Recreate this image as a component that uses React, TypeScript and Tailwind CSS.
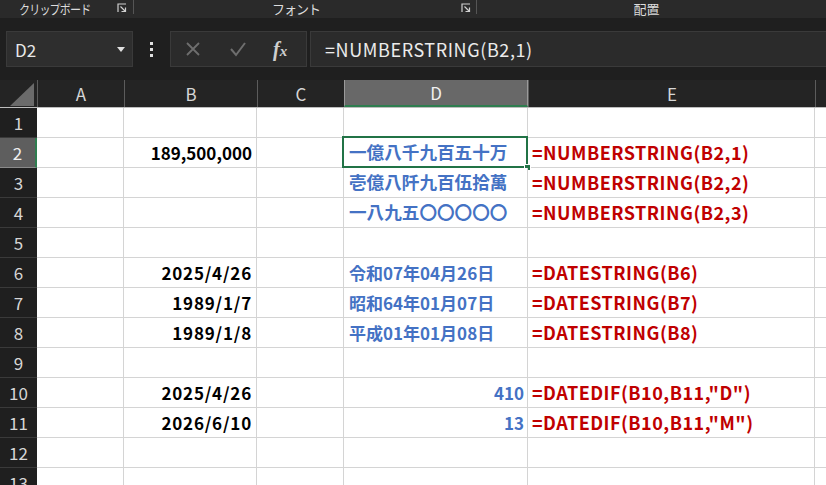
import React from 'react'

const jp = "font-['Noto_Sans_CJK_JP','Noto_Sans',sans-serif]"

type Row = { b?: string; d?: string; dRight?: boolean; e?: string; dSmall?: boolean }

const rows: Row[] = [
  {},
  { b: '189,500,000', d: '一億八千九百五十万', e: '=NUMBERSTRING(B2,1)' },
  { d: '壱億八阡九百伍拾萬', e: '=NUMBERSTRING(B2,2)' },
  { d: '一八九五〇〇〇〇〇', e: '=NUMBERSTRING(B2,3)' },
  {},
  { b: '2025/4/26', d: '令和07年04月26日', dSmall: true, e: '=DATESTRING(B6)' },
  { b: '1989/1/7', d: '昭和64年01月07日', dSmall: true, e: '=DATESTRING(B7)' },
  { b: '1989/1/8', d: '平成01年01月08日', dSmall: true, e: '=DATESTRING(B8)' },
  {},
  { b: '2025/4/26', d: '410', dRight: true, e: '=DATEDIF(B10,B11,"D")' },
  { b: '2026/6/10', d: '13', dRight: true, e: '=DATEDIF(B10,B11,"M")' },
  {},
  {},
]

function Launcher() {
  return (
    <svg width="10" height="10" viewBox="0 0 10 10" fill="none" stroke="#d0d0d0" strokeWidth="1.2">
      <path d="M1 9V1h8" />
      <path d="M3.5 3.5l5 5M8.5 4.5v4h-4" />
    </svg>
  )
}

function Ribbon() {
  return (
    <div className={`h-[18px] bg-[#2a2a2a] flex items-start text-[13px] leading-[18px] text-[#dcdcdc] ${jp}`}>
      <div className="w-[133px] h-[18px] flex items-start">
        <span className="ml-[19px] tracking-[-1px] scale-x-85 origin-left">クリップボード</span>
        <span className="ml-auto mr-[6px] mt-[3px]"><Launcher /></span>
      </div>
      <div className="w-px h-[14px] bg-[#555]" />
      <div className="w-[342px] h-[18px] flex items-start">
        <span className="ml-[138px] tracking-[-1px]">フォント</span>
        <span className="ml-auto mr-[5px] mt-[3px]"><Launcher /></span>
      </div>
      <div className="w-px h-[14px] bg-[#555]" />
      <div className="flex-1 h-[18px] flex justify-center pr-[10px]">
        <span>配置</span>
      </div>
    </div>
  )
}

function FormulaBar() {
  return (
    <div className={`h-[62px] bg-[#1f1f1f] flex items-start pt-[13px] ${jp}`}>
      <div className="ml-[6px] w-[127px] h-[36px] bg-[#2e2e2e] border border-[#3a3a3a] flex items-center pl-[8px] pr-[7px] text-[17px] text-[#e8e8e8]">
        <span className="mt-[2px]">D2</span>
        <svg className="ml-auto" width="8" height="5" viewBox="0 0 8 5"><path d="M0 0h8L4 5z" fill="#e0e0e0" /></svg>
      </div>
      <div className="w-[37px] h-[36px] flex flex-col items-center justify-center gap-[3px]">
        <span className="w-[3px] h-[3px] bg-[#e0e0e0]" />
        <span className="w-[3px] h-[3px] bg-[#e0e0e0]" />
        <span className="w-[3px] h-[3px] bg-[#e0e0e0]" />
      </div>
      <div className="w-[137px] h-[36px] bg-[#2b2b2b] border border-[#3a3a3a] flex items-center">
        <svg className="ml-[14px]" width="16" height="16" viewBox="0 0 16 16" stroke="#6e6e6e" strokeWidth="1.8" fill="none">
          <path d="M2 2l12 12M14 2L2 14" />
        </svg>
        <svg className="ml-[28px]" width="18" height="16" viewBox="0 0 18 16" stroke="#6e6e6e" strokeWidth="2" fill="none">
          <path d="M2 8l5 6L16 2" />
        </svg>
        <span className="ml-[26px] text-[20px] italic font-bold text-[#cfcfcf] font-['Liberation_Serif',serif] leading-none">
          f<span className="text-[15px]">x</span>
        </span>
      </div>
      <div className="ml-[3px] flex-1 h-[36px] bg-[#2b2b2b] border border-[#3a3a3a] border-r-0 flex items-center pl-[14px] text-[18px] text-[#ececec]">
        <span className="mt-[1px] tracking-[0.6px]">=NUMBERSTRING(B2,1)</span>
      </div>
    </div>
  )
}

const colW = ['w-[87px]', 'w-[133px]', 'w-[87px]', 'w-[184px]', 'w-[287px]']
const colNames = ['A', 'B', 'C', 'D', 'E']

function HeaderRow() {
  return (
    <div className={`flex h-[28px] bg-[#242424] border-b border-[#bdbdbd] ${jp}`}>
      <div className="w-[37px] relative shrink-0">
        <svg className="absolute left-[10px] top-[3px]" width="24" height="23" viewBox="0 0 24 23">
          <path d="M24 0V23H0z" fill="#6b6b6b" />
        </svg>
      </div>
      {colNames.map((c, i) =>
        c === 'D' ? (
          <div key={c} className={`${colW[i]} shrink-0 bg-[#686868] border-l border-r border-[#9a9a9a] border-b-2 border-b-[#2e7d4f] flex items-center justify-center text-[17px] text-[#f0f0f0]`}>
            {c}
          </div>
        ) : (
          <div key={c} className={`${colW[i]} shrink-0 border-l border-[#5c5c5c] first:border-l-0 flex items-center justify-center text-[17px] text-[#d6d6d6]`}>
            {c}
          </div>
        )
      )}
      <div className="flex-1 border-l border-[#5c5c5c]" />
    </div>
  )
}

function GridRow({ row, n }: { row: Row; n: number }) {
  const sel = n === 2
  return (
    <div className={`flex h-[30px] ${jp}`}>
      <div
        className={`w-[37px] shrink-0 flex items-center justify-center text-[17px] border-b ${
          sel ? 'bg-[#5e5e5e] text-[#f0f0f0] border-[#8a8a8a] border-r-2 border-r-[#2e7d4f]' : 'bg-[#1f1f1f] text-[#d6d6d6] border-[#3a3a3a]'
        }`}
      >
        {n}
      </div>
      <div className="w-[87px] shrink-0 border-r border-b border-[#d4d4d4] bg-white" />
      <div className="w-[133px] shrink-0 border-r border-b border-[#d4d4d4] bg-white flex items-center justify-end pr-[4px] text-[17px] font-bold text-black">
        <span className={row.b && row.b.includes('/') ? 'tracking-[0.8px]' : ''}>{row.b}</span>
      </div>
      <div className="w-[87px] shrink-0 border-r border-b border-[#d4d4d4] bg-white" />
      <div
        className={`w-[184px] shrink-0 border-r border-b border-[#d4d4d4] bg-white flex items-center font-bold text-[#4472c4] relative ${
          row.dRight ? 'justify-end pr-[3px] text-[17px]' : 'pl-[5px]'
        } ${row.dSmall ? 'text-[17px]' : row.dRight ? '' : 'text-[17.6px]'}`}
      >
        {row.d}
        {sel && (
          <>
            <div className="absolute left-[-2px] top-[-2px] right-[-1px] bottom-[-1px] border-2 border-[#217346] pointer-events-none" />
            <div className="absolute right-[-4px] bottom-[-4px] w-[7px] h-[7px] bg-[#217346] border border-white" />
          </>
        )}
      </div>
      <div className="w-[287px] shrink-0 border-r border-b border-[#d4d4d4] bg-white flex items-center pl-[4px] text-[18px] font-bold text-[#c00000]">
        <span className="tracking-[0.5px]">{row.e}</span>
      </div>
      <div className="flex-1 border-b border-[#d4d4d4] bg-white" />
    </div>
  )
}

export default function App() {
  return (
    <div className="w-[826px] h-[485px] overflow-hidden bg-white">
      <Ribbon />
      <FormulaBar />
      <HeaderRow />
      {rows.map((r, i) => (
        <GridRow key={i} row={r} n={i + 1} />
      ))}
    </div>
  )
}
